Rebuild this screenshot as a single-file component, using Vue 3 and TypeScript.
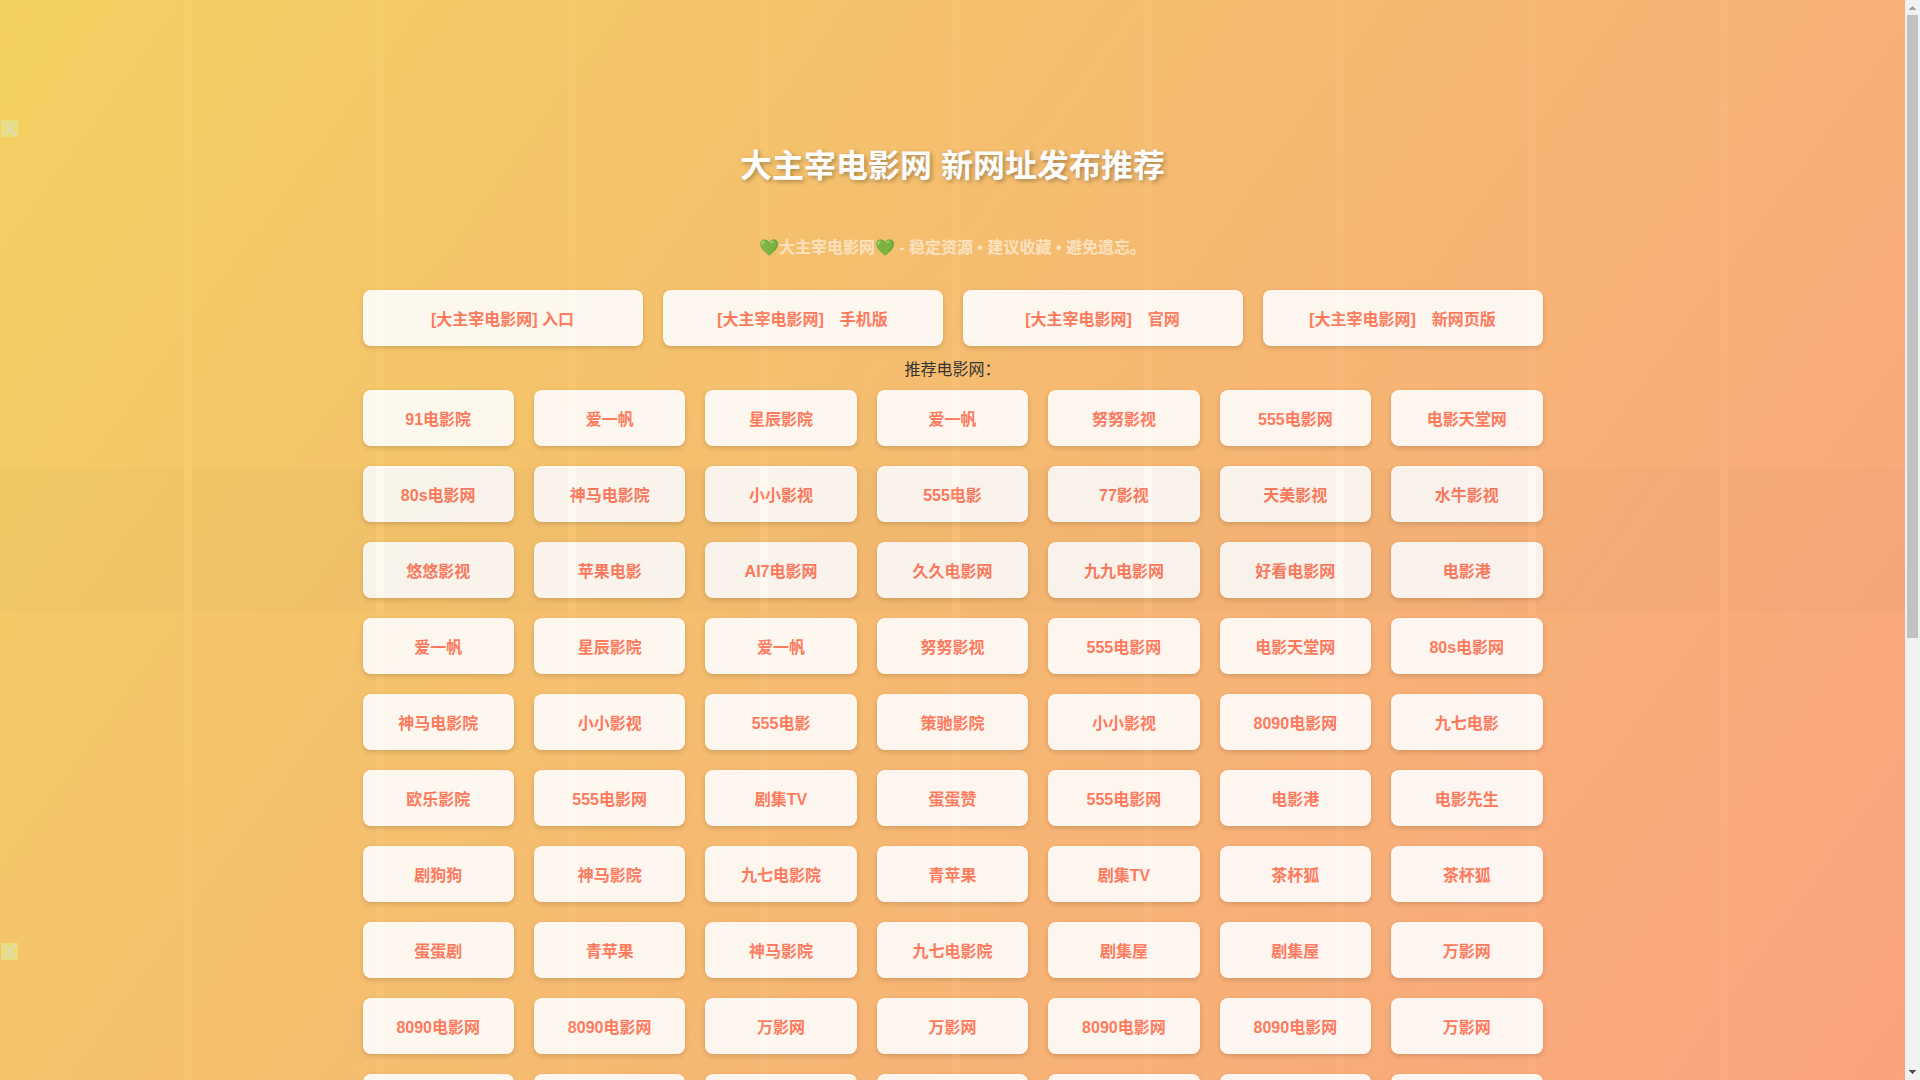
<script setup lang="ts">
const entries: string[] = [
  '[大主宰电影网] 入口',
  '[大主宰电影网]　手机版',
  '[大主宰电影网]　官网',
  '[大主宰电影网]　新网页版',
]

const sites: string[] = [
  '91电影院', '爱一帆', '星辰影院', '爱一帆', '努努影视', '555电影网', '电影天堂网',
  '80s电影网', '神马电影院', '小小影视', '555电影', '77影视', '天美影视', '水牛影视',
  '悠悠影视', '苹果电影', 'AI7电影网', '久久电影网', '九九电影网', '好看电影网', '电影港',
  '爱一帆', '星辰影院', '爱一帆', '努努影视', '555电影网', '电影天堂网', '80s电影网',
  '神马电影院', '小小影视', '555电影', '策驰影院', '小小影视', '8090电影网', '九七电影',
  '欧乐影院', '555电影网', '剧集TV', '蛋蛋赞', '555电影网', '电影港', '电影先生',
  '剧狗狗', '神马影院', '九七电影院', '青苹果', '剧集TV', '茶杯狐', '茶杯狐',
  '蛋蛋剧', '青苹果', '神马影院', '九七电影院', '剧集屋', '剧集屋', '万影网',
  '8090电影网', '8090电影网', '万影网', '万影网', '8090电影网', '8090电影网', '万影网',
]
const emptySlots = 7
</script>

<template>
  <div class="screen">
    <div class="page">
      <main class="container">
        <h1>大主宰电影网 新网址发布推荐</h1>
        <p class="tagline">💚大主宰电影网💚 - 稳定资源 • 建议收藏 • 避免遗忘。</p>
        <nav class="grid entries">
          <a v-for="(name, i) in entries" :key="i" class="card" href="#">{{ name }}</a>
        </nav>
        <p class="label">推荐电影网：</p>
        <nav class="grid sites">
          <a v-for="(name, i) in sites" :key="i" class="card" href="#">{{ name }}</a>
          <span v-for="n in emptySlots" :key="'slot' + n" class="card"></span>
        </nav>
      </main>
      <div class="stripes"></div>
      <div class="band"></div>
      <button class="close close-top" type="button" aria-label="关闭">
        <svg width="17" height="17" viewBox="0 0 17 17"><path d="M2 2L15 15M15 2L2 15" /></svg>
      </button>
      <button class="close close-bottom" type="button" aria-label="关闭">
        <svg width="17" height="17" viewBox="0 0 17 17"><path d="M2 2L15 15M15 2L2 15" /></svg>
      </button>
    </div>
    <div class="scrollbar">
      <svg class="arrow" viewBox="0 0 15 15" shape-rendering="crispEdges"><path fill="#a3a3a3" d="M7 6h1v1h1v1h1v1h1v1H4V9h1V8h1V7h1z" /></svg>
      <div class="track"><div class="thumb"></div></div>
      <svg class="arrow" viewBox="0 0 15 15" shape-rendering="crispEdges"><path fill="#505050" d="M4 5h7v1h-1v1H9v1H8v1H7V8H6V7H5V6H4z" /></svg>
    </div>
  </div>
</template>

<style>
body {
  margin: 0;
  overflow: hidden;
}
</style>

<style scoped>
.screen {
  display: flex;
  height: 100vh;
  font-family: "Liberation Sans", "Noto Sans CJK SC", sans-serif;
  font-size: 16px;
  line-height: 24px;
  color: #333;
}

.page {
  position: relative;
  flex: 1;
  overflow: hidden;
  background: linear-gradient(126deg, #f5d362, #f7bd70 45%, #fca480);
}

.container {
  max-width: 1180px;
  margin: 0 auto;
  padding-top: 141px;
  text-align: center;
}

h1 {
  margin: 0;
  font-size: 32px;
  line-height: 50px;
  color: #fff;
  text-shadow: 2px 2px 4px rgba(0, 0, 0, 0.3);
}

.tagline {
  margin: 45px 0 30px;
  font-weight: bold;
  color: #fde3c0;
}

.grid {
  display: grid;
  gap: 20px;
}

.entries {
  grid-template-columns: repeat(4, 1fr);
}

.sites {
  grid-template-columns: repeat(7, 1fr);
}

.label {
  margin: 12px 0 8px;
}

.card {
  box-sizing: border-box;
  height: 56px;
  padding: 18px 10px 14px;
  border-radius: 8px;
  background: rgba(255, 255, 255, 0.9);
  box-shadow: 0 2px 5px rgba(0, 0, 0, 0.15);
  color: #ff7b5e;
  font-weight: bold;
  text-decoration: none;
  white-space: nowrap;
}

.stripes,
.band {
  position: absolute;
  inset: 0;
  pointer-events: none;
}

.stripes {
  background: repeating-linear-gradient(90deg, rgba(0, 0, 0, 0.008) 0 184px, rgba(255, 255, 255, 0.03) 184px 192px);
}

.band {
  top: 468px;
  bottom: auto;
  height: 144px;
  background: repeating-linear-gradient(90deg, rgba(0, 0, 0, 0.016) 0 184px, transparent 184px 192px);
}

.close {
  position: absolute;
  left: 1px;
  width: 17px;
  height: 17px;
  padding: 0;
  border: 0;
  background: #e8df7c;
}

.close svg {
  display: block;
  fill: none;
  stroke: #dedad0;
  stroke-width: 1.3;
}

.close-top {
  top: 120px;
}

.close-bottom {
  bottom: 120px;
}

.scrollbar {
  display: flex;
  flex-direction: column;
  width: 15px;
  background: #f1f1f1;
}

.arrow {
  width: 15px;
  height: 15px;
}

.track {
  flex: 1;
  padding: 0 2px;
}

.thumb {
  height: 623px;
  background: #c1c1c1;
}
</style>
